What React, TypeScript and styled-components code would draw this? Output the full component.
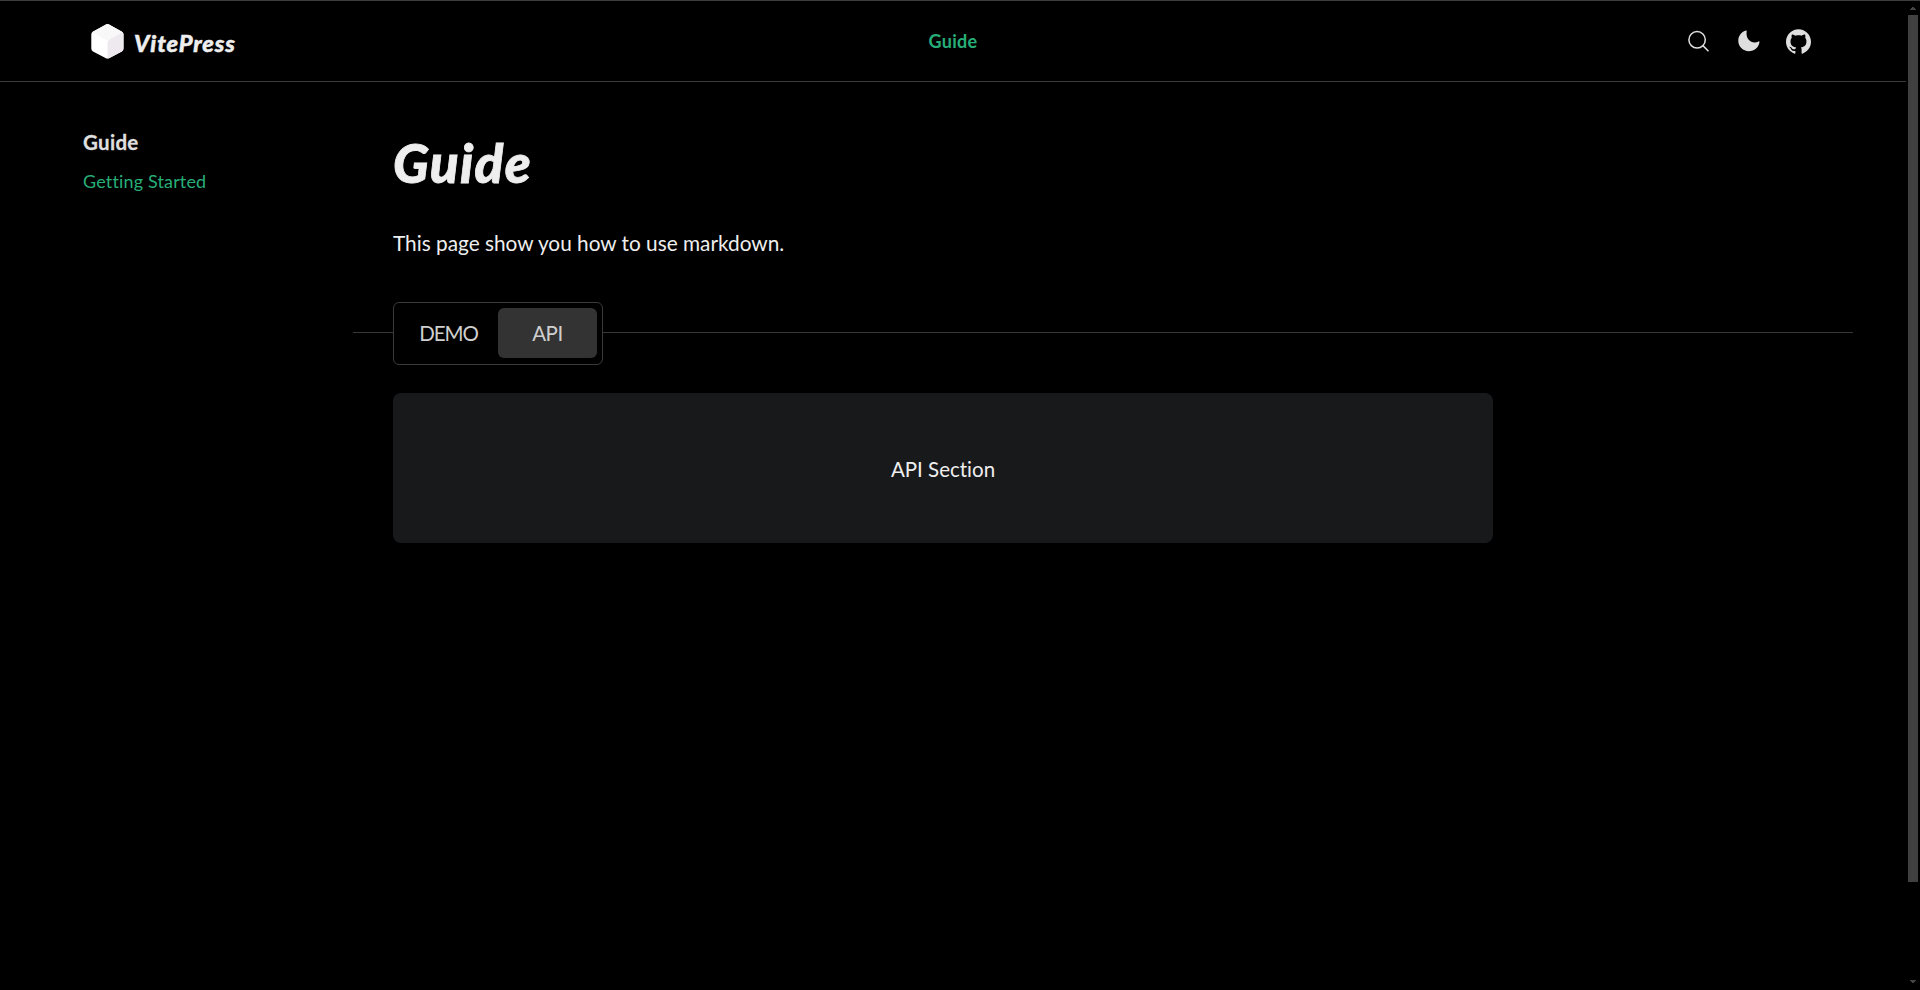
import React from 'react';
import styled, { createGlobalStyle } from 'styled-components';

const GlobalStyle = createGlobalStyle`
  * { box-sizing: border-box; }
  body {
    margin: 0;
    background: #000;
    color: #eee;
    font-family: Lato, "Noto Sans", sans-serif;
    font-variant-ligatures: none;
    overflow: hidden;
  }
`;

const Window = styled.div`
  display: grid;
  grid-template-columns: 1906px 14px;
  grid-template-rows: 989px;
  border-top: 1px solid #3c3c3c;
`;

const Page = styled.div`
  display: flex;
  flex-direction: column;
`;

const Header = styled.header`
  display: grid;
  grid-template-columns: 1fr auto 1fr;
  align-items: center;
  height: 81px;
  padding: 0 95px 0 91px;
  border-bottom: 1px solid #3c3c3c;
`;

const Brand = styled.a`
  display: flex;
  align-items: center;
  gap: 10px;
`;

const Logo = styled.svg`
  width: 33px;
  height: 35px;
  margin-top: 1px;
`;

const BrandName = styled.span`
  padding-top: 3px;
  font-size: 23.6px;
  font-style: italic;
  font-weight: 900;
  line-height: 32px;
  letter-spacing: 0.85px;
  -webkit-text-stroke: 0.5px currentColor;
`;

const NavLink = styled.a`
  padding-left: 4px;
  color: #27ae78;
  font-size: 18px;
  font-weight: 700;
  line-height: 26px;
  letter-spacing: 0.3px;
`;

const Actions = styled.div`
  display: flex;
  align-items: center;
  justify-content: flex-end;
  color: #dfdfdf;
`;

const IconButton = styled.button<{ $gap?: number }>`
  display: flex;
  margin: 0 0 0 ${(p) => p.$gap ?? 0}px;
  padding: 0;
  border: 0;
  background: none;
  color: inherit;
`;

const Body = styled.div`
  display: flex;
`;

const Sidebar = styled.aside`
  width: 353px;
  padding: 45px 0 0 83px;
`;

const SidebarTitle = styled.h2`
  margin: 0;
  color: #dfdfdf;
  font-size: 20.5px;
  font-weight: 700;
  line-height: 30px;
  letter-spacing: 0.3px;
  -webkit-text-stroke: 0.3px currentColor;
`;

const SidebarLink = styled.a`
  display: block;
  margin-top: 10px;
  color: #27ae78;
  font-size: 18px;
  line-height: 28px;
  letter-spacing: 0.15px;
`;

const Content = styled.main`
  width: 1500px;
  padding-top: 51px;
`;

const Title = styled.h1`
  margin: 0 0 0 40px;
  font-size: 53px;
  font-style: italic;
  font-weight: 900;
  line-height: 60px;
  letter-spacing: 1.3px;
  -webkit-text-stroke: 0.8px currentColor;
`;

const Paragraph = styled.p`
  margin: 36px 0 0 40px;
  font-size: 20.8px;
  line-height: 28px;
`;

const TabBar = styled.div`
  display: flex;
  align-items: center;
  margin-top: 45px;
`;

const Rule = styled.span<{ $lead?: boolean }>`
  flex: ${(p) => (p.$lead ? '0 0 40px' : '1')};
  height: 1px;
  margin-bottom: 2px;
  background: #383838;
`;

const Tabs = styled.div`
  display: flex;
  width: 210px;
  height: 63px;
  padding: 5px;
  border: 1px solid #3a3a3a;
  border-radius: 6px;
`;

const Tab = styled.button<{ $active?: boolean }>`
  width: 99px;
  height: 50px;
  padding: 0;
  border: 0;
  border-radius: 6px;
  background: ${(p) => (p.$active ? '#333' : 'transparent')};
  color: #cfcfcf;
  font-family: inherit;
  font-size: 20.5px;
  line-height: 28px;
  letter-spacing: ${(p) => (p.$active ? '-0.4px' : '-1.1px')};
`;

const Panel = styled.section`
  display: flex;
  align-items: center;
  justify-content: center;
  width: 1100px;
  height: 150px;
  margin: 28px 0 0 40px;
  padding-top: 1px;
  border-radius: 8px;
  background: #18191b;
  font-size: 20.5px;
  line-height: 28px;
`;

const ScrollBar = styled.div`
  display: flex;
  flex-direction: column;
  align-items: center;
  padding: 6px 1px 5px 1px;
  color: #444;
`;

const Thumb = styled.div`
  width: 10px;
  height: 867px;
  margin: 5px 0 98px;
  background: #404040;
`;

const Arrow = ({ down }: { down?: boolean }) => (
  <svg width="6" height="3" viewBox="0 0 6 3" fill="currentColor">
    <path d={down ? 'M0 0H6V1H5V2H4V3H2V2H1V1H0Z' : 'M0 3H6V2H5V1H4V0H2V1H1V2H0Z'} />
  </svg>
);

export default function App() {
  return (
    <>
      <GlobalStyle />
      <Window>
        <Page>
          <Header>
            <Brand>
              <Logo viewBox="0 0 33 36" preserveAspectRatio="none">
                <path
                  d="M14.5.7a4 4 0 0 1 4 0L30.8 7.6A3.5 3.5 0 0 1 32.5 10.6V25.3A3.5 3.5 0 0 1 30.8 28.3L18.5 35a4 4 0 0 1-4 0L2 28.3A3.5 3.5 0 0 1 .3 25.3V10.6A3.5 3.5 0 0 1 2 7.6Z"
                  fill="#fff"
                />
                <path d="M1.2 8.5 14.5.7a4 4 0 0 1 4 0L31.7 8.5 18.5 16a4 4 0 0 1-4 0Z" fill="#f9f8f9" />
                <path
                  d="M16.5 19.5a4 4 0 0 1 2-3.5L31.7 8.5a4 4 0 0 1 .8 2.2V25.3A3.5 3.5 0 0 1 30.8 28.3L18.5 35a4 4 0 0 1-2 .5Z"
                  fill="#eee9ee"
                />
              </Logo>
              <BrandName>VitePress</BrandName>
            </Brand>
            <NavLink>Guide</NavLink>
            <Actions>
              <IconButton aria-label="Search">
                <svg width="22" height="22" viewBox="0 -0.6 22 22" fill="none" stroke="currentColor" strokeWidth="1.5">
                  <circle cx="9.1" cy="9.2" r="8.2" />
                  <path d="m14.900 15 5.600 5.600" />
                </svg>
              </IconButton>
              <IconButton aria-label="Theme" $gap={28}>
                <svg width="22" height="22" viewBox="0 0 22 22" fill="currentColor">
                  <path d="M8 .5C4 1.500.3 5.600.3 10.500A10.500 10.500 0 0 0 10.800 21.200C16.400 21.200 21 17.400 21.500 11.800 21.500 11.300 21 11 20.500 11.400 15.500 14.300 7.100 11 8.700 1 8.700.600 8.400.400 8 .500Z" />
                </svg>
              </IconButton>
              <IconButton aria-label="GitHub" $gap={26}>
                <svg width="25" height="25" viewBox="0 0 24 24" fill="currentColor">
                  <path d="M12 .297c-6.630 0-12 5.373-12 12 0 5.303 3.438 9.800 8.205 11.385.6.113.82-.258.82-.577 0-.285-.01-1.040-.015-2.040-3.338.724-4.042-1.610-4.042-1.610C4.422 18.070 3.633 17.700 3.633 17.700c-1.087-.744.084-.729.084-.729 1.205.084 1.838 1.236 1.838 1.236 1.070 1.835 2.809 1.305 3.495.998.108-.776.417-1.305.76-1.605-2.665-.3-5.466-1.332-5.466-5.930 0-1.310.465-2.380 1.235-3.220-.135-.303-.54-1.523.105-3.176 0 0 1.005-.322 3.300 1.230.96-.267 1.980-.399 3-.405 1.020.006 2.040.138 3 .405 2.280-1.552 3.285-1.230 3.285-1.230.645 1.653.24 2.873.12 3.176.765.840 1.230 1.910 1.230 3.220 0 4.610-2.805 5.625-5.475 5.920.42.360.81 1.096.81 2.220 0 1.606-.015 2.896-.015 3.286 0 .315.21.690.825.570C20.565 22.092 24 17.592 24 12.297c0-6.627-5.373-12-12-12" />
                </svg>
              </IconButton>
            </Actions>
          </Header>
          <Body>
            <Sidebar>
              <SidebarTitle>Guide</SidebarTitle>
              <SidebarLink>Getting Started</SidebarLink>
            </Sidebar>
            <Content>
              <Title>Guide</Title>
              <Paragraph>This page show you how to use markdown.</Paragraph>
              <TabBar>
                <Rule $lead />
                <Tabs>
                  <Tab>DEMO</Tab>
                  <Tab $active>API</Tab>
                </Tabs>
                <Rule />
              </TabBar>
              <Panel>API Section</Panel>
            </Content>
          </Body>
        </Page>
        <ScrollBar>
          <Arrow />
          <Thumb />
          <Arrow down />
        </ScrollBar>
      </Window>
    </>
  );
}
